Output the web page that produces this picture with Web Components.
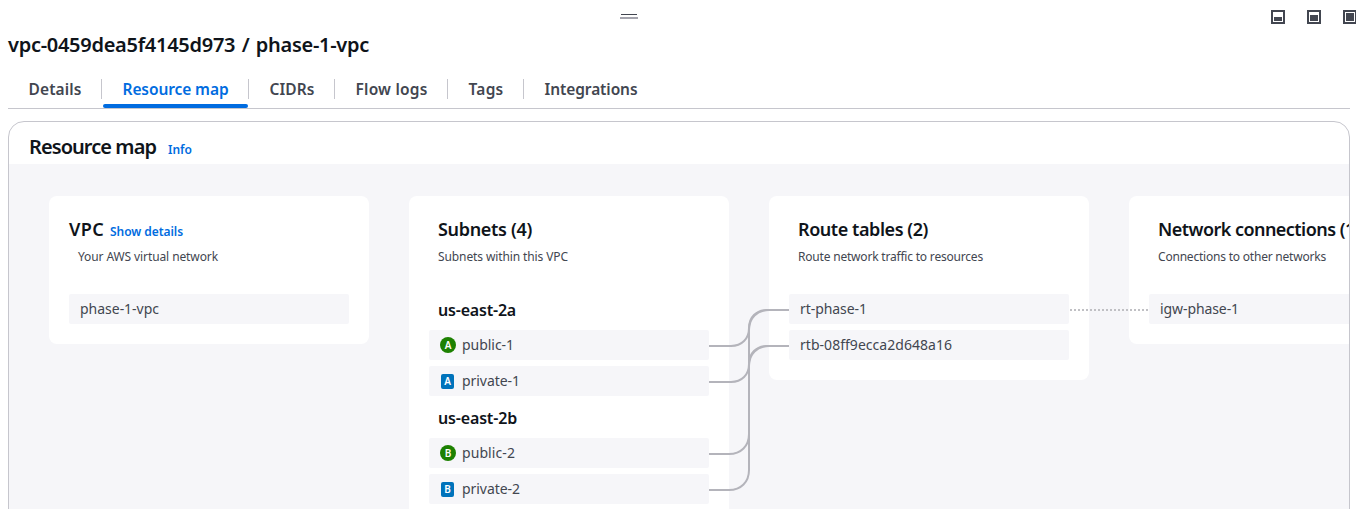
<!DOCTYPE html>
<html lang="en">
<head>
<meta charset="utf-8">
<title>phase-1-vpc | Resource map</title>
<style>
html,body{margin:0;height:100%;overflow:hidden;background:#fff}
body{font:14px/20px "Noto Sans","Open Sans",sans-serif;color:#424650}
</style>
</head>
<body>
<split-panel>
  <panel-toolbar slot="toolbar"></panel-toolbar>
  <fit-text slot="title" width="361" style="word-spacing:1.5px">vpc-0459dea5f4145d973 / phase-1-vpc</fit-text>
  <tab-bar slot="tabs">
    <tab-item><fit-text width="53">Details</fit-text></tab-item>
    <tab-item active><fit-text width="106">Resource map</fit-text></tab-item>
    <tab-item><fit-text width="45">CIDRs</fit-text></tab-item>
    <tab-item><fit-text width="72">Flow logs</fit-text></tab-item>
    <tab-item><fit-text width="35">Tags</fit-text></tab-item>
    <tab-item><fit-text width="93">Integrations</fit-text></tab-item>
  </tab-bar>
  <map-container>
    <fit-text slot="title" width="127">Resource map</fit-text>
    <fit-text slot="info" width="24">Info</fit-text>
    <map-card flush>
      <fit-text slot="title" width="35">VPC</fit-text>
      <fit-text slot="link" width="73">Show details</fit-text>
      <fit-text slot="description" width="140">Your AWS virtual network</fit-text>
      <map-row><fit-text width="79">phase-1-vpc</fit-text></map-row>
    </map-card>
    <map-card>
      <fit-text slot="title" width="94">Subnets (4)</fit-text>
      <fit-text slot="description" width="130">Subnets within this VPC</fit-text>
      <zone-label><fit-text width="78">us-east-2a</fit-text></zone-label>
      <map-row><zone-badge slot="icon" kind="public">A</zone-badge><fit-text width="52">public-1</fit-text></map-row>
      <map-row><zone-badge slot="icon" kind="private">A</zone-badge><fit-text width="58">private-1</fit-text></map-row>
      <zone-label><fit-text width="79">us-east-2b</fit-text></zone-label>
      <map-row><zone-badge slot="icon" kind="public">B</zone-badge><fit-text width="53">public-2</fit-text></map-row>
      <map-row><zone-badge slot="icon" kind="private">B</zone-badge><fit-text width="58">private-2</fit-text></map-row>
    </map-card>
    <map-card>
      <fit-text slot="title" width="130">Route tables (2)</fit-text>
      <fit-text slot="description" width="185">Route network traffic to resources</fit-text>
      <map-row><fit-text width="67">rt-phase-1</fit-text></map-row>
      <map-row><fit-text width="152">rtb-08ff9ecca2d648a16</fit-text></map-row>
    </map-card>
    <map-card>
      <fit-text slot="title" width="202">Network connections (1)</fit-text>
      <fit-text slot="description" width="168">Connections to other networks</fit-text>
      <map-row><fit-text width="79">igw-phase-1</fit-text></map-row>
    </map-card>
    <map-links slot="links"></map-links>
  </map-container>
</split-panel>
<script>
function component(name, html, setup) {
  customElements.define(name, class extends HTMLElement {
    constructor() {
      super();
      this.attachShadow({ mode: "open" }).innerHTML = html;
    }
    connectedCallback() { if (setup) setup(this); }
  });
}

component("split-panel", `
<style>
:host{display:flex;flex-direction:column;height:100vh;overflow:hidden}
h2{margin:0;padding:0 8px;font-size:20px;line-height:24px;font-weight:650;color:#0f141a;height:34px}
main{flex:1;min-height:0;padding:12px 6px 0 8px}
</style>
<slot name="toolbar"></slot><h2><slot name="title"></slot></h2><slot name="tabs"></slot><main><slot></slot></main>`);

component("panel-toolbar", `
<style>
:host{display:grid;grid-template-columns:1fr auto;height:33px;flex:none;overflow:hidden}
svg{display:block}
.grip{margin:14px 0 0 620px}
.sizes{display:flex;gap:22px;padding-top:10px;margin-right:-1px}
</style>
<svg class="grip" width="18" height="5"><path d="M1 0h16v1H1z" fill="#424650"/><path d="M0 3h18v2H0z" fill="#a4a4ad"/></svg>
<div class="sizes">
<svg width="14" height="14" fill="none" stroke="#424650" stroke-width="2"><path d="M1 1h12v12H1z"/><path d="M3 7h8v4H3z" fill="#424650" stroke="none"/></svg>
<svg width="14" height="14" fill="none" stroke="#424650" stroke-width="2"><path d="M1 1h12v12H1z"/><path d="M3 5h8v6H3z" fill="#424650" stroke="none"/></svg>
<svg width="14" height="14" fill="none" stroke="#424650" stroke-width="2"><path d="M1 1h12v12H1z"/><path d="M3 3h8v8H3z" fill="#424650" stroke="none"/></svg>
</div>`);

component("tab-bar", `
<style>
:host{display:flex;flex:none;margin:0 6px 0 8px;height:41px;border-bottom:1px solid #c6c6cd;font-weight:650;font-size:15.5px}
</style><slot></slot>`);

component("tab-item", `
<style>
:host{display:block;position:relative;padding:12px 19.5px 0 20.5px;height:29px}
:host(:not(:last-child))::after{content:"";position:absolute;right:0;top:12px;height:20px;width:1px;background:#c6c6cd}
:host(:not(:last-child)){padding-right:20.5px}
:host([active]){color:#006ce0}
:host([active])::before{content:"";position:absolute;left:1px;right:1px;top:37px;height:4px;border-radius:2px;background:#006ce0}
</style><slot></slot>`);

component("map-container", `
<style>
:host{display:flex;flex-direction:column;height:420px;box-sizing:border-box;border:1px solid #c6c6cd;border-radius:16px;overflow:hidden}
header{display:flex;align-items:baseline;height:42px;padding-left:20px;box-sizing:border-box;flex:none}
h3{margin:0;font-size:20px;line-height:50px;font-weight:650;color:#0f141a}
a{margin-left:12px;font-size:12px;font-weight:650;color:#006ce0}
.canvas{flex:1;position:relative;display:flex;align-items:flex-start;gap:40px;padding:32px 40px 0;background:#f6f6f9}
</style>
<header><h3><slot name="title"></slot></h3><a><slot name="info"></slot></a></header>
<div class="canvas"><slot></slot><slot name="links"></slot></div>`);

component("map-card", `
<style>
:host{display:block;flex:none;width:320px;box-sizing:border-box;padding:19px 20px 20px;border-radius:8px;background:#fff}
.head{height:28px;padding-left:9px;display:flex;align-items:baseline;gap:6px;white-space:nowrap}
:host([flush]) .head{padding-left:0}
h4{margin:0;font-size:18px;line-height:28px;font-weight:650;color:#0f141a}
a{font-size:12px;font-weight:650;color:#006ce0}
p{margin:4px 0 27px 9px;font-size:12px;line-height:20px;white-space:nowrap}
.rows{display:flex;flex-direction:column;gap:6px}
</style>
<div class="head"><h4><slot name="title"></slot></h4><a><slot name="link"></slot></a></div>
<p><slot name="description"></slot></p>
<div class="rows"><slot></slot></div>`);

component("map-row", `
<style>
:host{display:flex;align-items:center;height:30px;box-sizing:border-box;padding:0 11px;border-radius:2px;background:#f6f6f9;white-space:nowrap}
</style><slot name="icon"></slot><slot></slot>`);

component("zone-label", `
<style>
:host{display:block;height:30px;padding-left:9px;box-sizing:border-box;font-size:16px;line-height:32px;font-weight:650;color:#0f141a}
</style><slot></slot>`);

component("zone-badge", `
<style>
:host{display:flex;align-items:center;justify-content:center;width:16px;height:16px;border-radius:8px;margin-right:6px;background:#1d8102;color:#fff;font-size:10px;line-height:14px;font-weight:650}
:host([kind=private]){width:13px;height:15px;border-radius:2px;margin:0 8px 0 1px;background:#0073bb}
</style><slot></slot>`);

/* Each link leaves a subnet row, joins the shared trunk at x=740 and ends at its route table. */
component("map-links", `
<style>
:host{position:absolute;inset:0;pointer-events:none}
svg{display:block}
</style>
<svg width="1340" height="360" fill="none" stroke="#b4b4bb" stroke-width="2"></svg>`, el => {
  const link = (from, to) => {
    const r = Math.min(20, (from - to) / 2), k = r * .4;
    return `<path d="M700 ${from}H${740 - r}C${740 - k} ${from} 740 ${from - k} 740 ${from - r}V${to + r}C740 ${to + k} ${740 + k} ${to} ${740 + r} ${to}H780"/>`;
  };
  el.shadowRoot.querySelector("svg").innerHTML =
    link(182, 146) + link(218, 182) + link(290, 146) + link(326, 182) +
    `<path d="M1061 146h79" stroke="#c0c0c4" stroke-dasharray="2 2"/>`;
});

/* Spreads its text over the given width by tracking. */
component("fit-text", `
<style>
:host{display:inline-block;white-space:nowrap}
</style><span><slot></slot></span>`, el => {
  const natural = el.shadowRoot.querySelector("span").getBoundingClientRect().width;
  const target = +el.getAttribute("width");
  el.style.letterSpacing = (target - natural) / el.textContent.length + "px";
});
</script>
</body>
</html>
